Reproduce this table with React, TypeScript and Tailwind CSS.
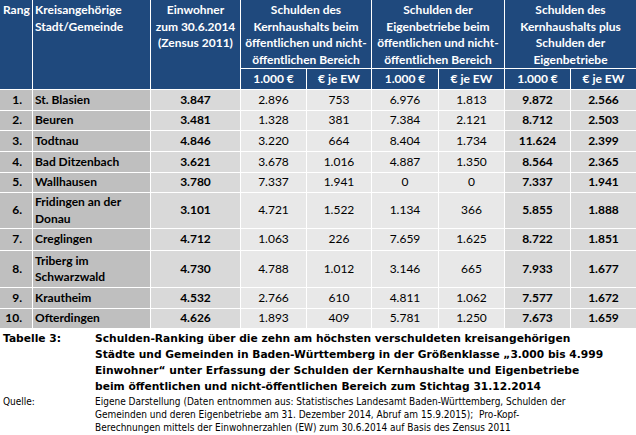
import React from 'react';

type Row = {
  rang: string;
  name: string[];
  ew: string;
  kern: [string, string];
  eigen: [string, string];
  sum: [string, string];
};

const ROWS: Row[] = [
  { rang: '1.', name: ['St. Blasien'], ew: '3.847', kern: ['2.896', '753'], eigen: ['6.976', '1.813'], sum: ['9.872', '2.566'] },
  { rang: '2.', name: ['Beuren'], ew: '3.481', kern: ['1.328', '381'], eigen: ['7.384', '2.121'], sum: ['8.712', '2.503'] },
  { rang: '3.', name: ['Todtnau'], ew: '4.846', kern: ['3.220', '664'], eigen: ['8.404', '1.734'], sum: ['11.624', '2.399'] },
  { rang: '4.', name: ['Bad Ditzenbach'], ew: '3.621', kern: ['3.678', '1.016'], eigen: ['4.887', '1.350'], sum: ['8.564', '2.365'] },
  { rang: '5.', name: ['Wallhausen'], ew: '3.780', kern: ['7.337', '1.941'], eigen: ['0', '0'], sum: ['7.337', '1.941'] },
  { rang: '6.', name: ['Fridingen an der', 'Donau'], ew: '3.101', kern: ['4.721', '1.522'], eigen: ['1.134', '366'], sum: ['5.855', '1.888'] },
  { rang: '7.', name: ['Creglingen'], ew: '4.712', kern: ['1.063', '226'], eigen: ['7.659', '1.625'], sum: ['8.722', '1.851'] },
  { rang: '8.', name: ['Triberg im', 'Schwarzwald'], ew: '4.730', kern: ['4.788', '1.012'], eigen: ['3.146', '665'], sum: ['7.933', '1.677'] },
  { rang: '9.', name: ['Krautheim'], ew: '4.532', kern: ['2.766', '610'], eigen: ['4.811', '1.062'], sum: ['7.577', '1.672'] },
  { rang: '10.', name: ['Ofterdingen'], ew: '4.626', kern: ['1.893', '409'], eigen: ['5.781', '1.250'], sum: ['7.673', '1.659'] },
];

const head = 'bg-[#1f497d] text-white font-bold';
const num = 'flex items-center justify-center';

export default function App() {
  return (
    <div className="w-[636px] h-[435px] bg-white overflow-hidden text-black">
      {/* Tabelle */}
      <div className="grid grid-cols-[32px_117px_89px_65px_64px_66px_65px_65px_65px] grid-rows-[68px_20px_20px_19px_20px_20px_19px_35px_21px_36px_20px_19px] gap-px bg-white text-[12px] leading-[16.5px] font-['Lato',sans-serif]">
        <div className={`${head} row-span-2 pl-[3px] pt-[2px]`}>Rang</div>
        <div className={`${head} row-span-2 pl-[2px] pt-[2px]`}>
          Kreisangehörige
          <br />
          Stadt/Gemeinde
        </div>
        <div className={`${head} row-span-2 text-center pt-[2px]`}>
          Einwohner
          <br />
          zum 30.6.2014
          <br />
          (Zensus 2011)
        </div>
        <div className={`${head} col-span-2 text-center pt-[2px]`}>
          Schulden des
          <br />
          Kernhaushalts beim
          <br />
          öffentlichen und nicht-
          <br />
          öffentlichen Bereich
        </div>
        <div className={`${head} col-span-2 text-center pt-[2px]`}>
          Schulden der
          <br />
          Eigenbetriebe beim
          <br />
          öffentlichen und nicht-
          <br />
          öffentlichen Bereich
        </div>
        <div className={`${head} col-span-2 text-center pt-[2px]`}>
          Schulden des
          <br />
          Kernhaushalts plus
          <br />
          Schulden der
          <br />
          Eigenbetriebe
        </div>
        {['1.000 €', '€ je EW', '1.000 €', '€ je EW', '1.000 €', '€ je EW'].map((t, i) => (
          <div key={i} className={`${head} ${num}`}>
            {t}
          </div>
        ))}

        {ROWS.map((r) => (
          <React.Fragment key={r.rang}>
            <div className="bg-[#bfbfbf] font-bold flex items-center justify-end pr-[10px]">{r.rang}</div>
            <div className="bg-[#bfbfbf] font-bold flex flex-col justify-center pl-[2px]">
              {r.name.map((n) => (
                <span key={n}>{n}</span>
              ))}
            </div>
            <div className={`bg-[#d9d9d9] font-bold ${num}`}>{r.ew}</div>
            <div className={`bg-[#e8e8e8] ${num}`}>{r.kern[0]}</div>
            <div className={`bg-[#e8e8e8] ${num}`}>{r.kern[1]}</div>
            <div className={`bg-[#e8e8e8] ${num}`}>{r.eigen[0]}</div>
            <div className={`bg-[#e8e8e8] ${num}`}>{r.eigen[1]}</div>
            <div className={`bg-[#d9d9d9] font-bold ${num}`}>{r.sum[0]}</div>
            <div className={`bg-[#d9d9d9] font-bold ${num}`}>{r.sum[1]}</div>
          </React.Fragment>
        ))}
      </div>

      {/* Beschriftung */}
      <div className="mt-[3px] flex font-['DejaVu_Sans',sans-serif] font-bold text-[10.7px] leading-[16px]">
        <div className="w-[95px] pl-[3px] shrink-0">Tabelle 3:</div>
        <div className="whitespace-nowrap">
          Schulden-Ranking über die zehn am höchsten verschuldeten kreisangehörigen
          <br />
          Städte und Gemeinden in Baden-Württemberg in der Größenklasse „3.000 bis 4.999
          <br />
          Einwohner“ unter Erfassung der Schulden der Kernhaushalte und Eigenbetriebe
          <br />
          beim öffentlichen und nicht-öffentlichen Bereich zum Stichtag 31.12.2014
        </div>
      </div>
      <div className="flex font-['DejaVu_Sans_Condensed','DejaVu_Sans',sans-serif] text-[10px] leading-[13px]">
        <div className="w-[95px] pl-[3px] shrink-0">Quelle:</div>
        <div className="whitespace-nowrap">
          Eigene Darstellung (Daten entnommen aus: Statistisches Landesamt Baden-Württemberg, Schulden der
          <br />
          Gemeinden und deren Eigenbetriebe am 31. Dezember 2014, Abruf am 15.9.2015);&nbsp; Pro-Kopf-
          <br />
          Berechnungen mittels der Einwohnerzahlen (EW) zum 30.6.2014 auf Basis des Zensus 2011
        </div>
      </div>
    </div>
  );
}
